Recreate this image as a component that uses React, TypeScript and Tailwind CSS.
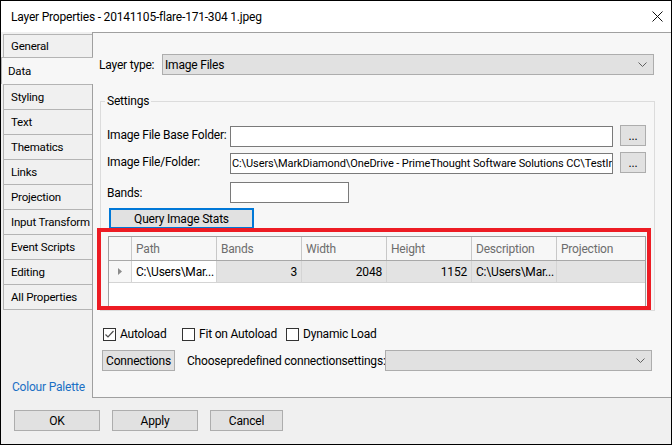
import React from 'react';

const tabs = [
  'General',
  'Data',
  'Styling',
  'Text',
  'Thematics',
  'Links',
  'Projection',
  'Input Transform',
  'Event Scripts',
  'Editing',
  'All Properties',
];

function Chevron() {
  return (
    <svg width="9" height="6" viewBox="0 0 9 6" className="shrink-0">
      <path d="M0.5 0.5 L4.5 4.5 L8.5 0.5" fill="none" stroke="#606060" strokeWidth="1" />
    </svg>
  );
}

function Combo({ value, className }: { value?: string; className: string }) {
  return (
    <div className={`relative h-[21px] bg-[#e1e1e1] border border-[#adadad] flex items-center pl-[2px] pr-[6px] shrink-0 ${className}`}>
      <span className="flex-1 leading-[16px]">{value}</span>
      <Chevron />
    </div>
  );
}

function Btn({ label, className }: { label: string; className: string }) {
  return (
    <div className={`h-[21px] bg-[#e1e1e1] border border-[#adadad] flex items-center justify-center leading-[16px] shrink-0 ${className}`}>
      {label}
    </div>
  );
}

function Check({ checked, label, className }: { checked?: boolean; label: string; className: string }) {
  return (
    <div className={`flex items-center shrink-0 ${className}`}>
      <div className="w-[13px] h-[13px] border border-[#333333] bg-white flex items-center justify-center shrink-0">
        {checked && (
          <svg width="11" height="11" viewBox="0 0 11 11">
            <path d="M1.5 5.5 L4 8 L9.5 2" fill="none" stroke="#4d4d4d" strokeWidth="1.2" />
          </svg>
        )}
      </div>
      <span className="ml-[4px] leading-[16px] whitespace-nowrap">{label}</span>
    </div>
  );
}

function DataGrid() {
  const head = 'h-[23px] border-l border-[#c8c8c8] flex items-center pl-[4px] text-[#6d6d6d]';
  const cell = 'h-full border-l border-[#d4d4d4] flex items-center';
  return (
    <div className="ml-[7px] mt-[7px] w-[538px] h-[71px] border border-[#a0a0a0] bg-white flex flex-col">
      {/* Header */}
      <div className="flex bg-[#f7f7f7] border-b border-[#a8a8a8]">
        <div className="w-[22px] h-[23px]" />
        <div className={`w-[85px] ${head}`}>Path</div>
        <div className={`w-[85px] ${head}`}>Bands</div>
        <div className={`w-[85px] ${head}`}>Width</div>
        <div className={`w-[85px] ${head}`}>Height</div>
        <div className={`w-[85px] ${head}`}>Description</div>
        <div className={`flex-1 ${head}`}>Projection</div>
      </div>
      {/* Row */}
      <div className="flex h-[22px] border-b border-[#d4d4d4] bg-[#e3e3e3]">
        <div className="w-[22px] h-full bg-[#f7f7f7] flex items-center pl-[9px]">
          <svg width="4" height="7" viewBox="0 0 4 7">
            <path d="M0 0 L4 3.5 L0 7 Z" fill="#8c8c8c" />
          </svg>
        </div>
        <div className={`w-[85px] bg-white pl-[4px] ${cell}`}>C:\Users\Mar...</div>
        <div className={`w-[85px] justify-end pr-[4px] ${cell}`}>3</div>
        <div className={`w-[85px] justify-end pr-[4px] ${cell}`}>2048</div>
        <div className={`w-[85px] justify-end pr-[4px] ${cell}`}>1152</div>
        <div className={`w-[85px] pl-[4px] ${cell}`}>C:\Users\Mar...</div>
        <div className={`flex-1 ${cell}`} />
      </div>
    </div>
  );
}

export default function App() {
  return (
    <div className="w-[672px] h-[445px] border border-black bg-[#f0f0f0] flex flex-col text-[12px] tracking-[-0.2px] text-black font-['Roboto',sans-serif] overflow-hidden">
      {/* Title bar */}
      <div className="h-[31px] bg-white flex items-center justify-between pl-[10px] pr-[8px] shrink-0">
        <span className="leading-[16px]">Layer Properties - 20141105-flare-171-304 1.jpeg</span>
        <svg width="11" height="11" viewBox="0 0 11 11">
          <path d="M0.5 0.5 L10.5 10.5 M10.5 0.5 L0.5 10.5" stroke="#111111" strokeWidth="1" />
        </svg>
      </div>

      {/* Main */}
      <div className="h-[366px] flex shrink-0">
        {/* Tabs */}
        <div className="w-[91px] flex flex-col shrink-0 text-[11.5px]">
          {tabs.map((t, i) =>
            t === 'Data' ? (
              <div
                key={t}
                className="relative z-10 w-[92px] h-[27px] bg-[#f7f7f7] border-t border-l border-[#b4b4b4] flex items-center pl-[6px] leading-[16px]"
              >
                {t}
              </div>
            ) : (
              <div
                key={t}
                className={`ml-[2px] w-[89px] border-t border-l border-[#b4b4b4] bg-[#f0f0f0] flex items-center pl-[7px] leading-[16px] whitespace-nowrap ${
                  i === 0 ? 'mt-[2px] h-[23px]' : 'h-[25px]'
                } ${i === tabs.length - 1 ? 'border-b h-[26px]' : ''}`}
              >
                {t}
              </div>
            )
          )}
          <div className="mt-auto mb-[3px] pl-[11px] leading-[16px] text-[12px] text-[#1a6fc4] whitespace-nowrap">Colour Palette</div>
        </div>

        {/* Panel */}
        <div className="flex-1 border-t border-b border-l border-[#a0a0a0] bg-[#f7f7f7] flex flex-col">
          <div className="mt-[21px] pl-[6px] flex items-center">
            <span className="w-[63px] leading-[16px] shrink-0">Layer type:</span>
            <Combo value="Image Files" className="w-[492px]" />
          </div>

          {/* Settings group */}
          <div className="relative mt-[26px] ml-[7px] w-[555px] h-[210px] border border-[#dcdcdc] flex flex-col">
            <span className="absolute left-[4px] top-[-9px] px-[2px] bg-[#f7f7f7] leading-[16px]">Settings</span>

            <div className="mt-[23px] pl-[6px] flex items-start">
              <span className="w-[123px] mt-[2px] leading-[16px] whitespace-nowrap shrink-0">Image File Base Folder:</span>
              <div className="mt-[1px] w-[383px] h-[21px] bg-white border border-[#7a7a7a] shrink-0" />
              <Btn label="..." className="ml-[7px] w-[26px]" />
            </div>

            <div className="mt-[5px] pl-[6px] flex items-start">
              <span className="w-[123px] mt-[2px] leading-[16px] whitespace-nowrap shrink-0">Image File/Folder:</span>
              <div className="mt-[1px] w-[383px] h-[21px] bg-white border border-[#7a7a7a] pl-[1px] flex items-center overflow-hidden whitespace-nowrap leading-[16px] text-[11px] tracking-[-0.1px] shrink-0">
                C:\Users\MarkDiamond\OneDrive - PrimeThought Software Solutions CC\TestIr
              </div>
              <Btn label="..." className="ml-[7px] w-[26px]" />
            </div>

            <div className="mt-[8px] pl-[6px] flex items-center">
              <span className="w-[123px] leading-[16px] shrink-0">Bands:</span>
              <div className="w-[119px] h-[21px] bg-white border border-[#7a7a7a] shrink-0" />
            </div>

            <div className="mt-[5px] ml-[8px] w-[145px] h-[21px] bg-[#e1e1e1] border-2 border-[#0078d7] flex items-center justify-center leading-[16px]">
              Query Image Stats
            </div>

            <DataGrid />

            {/* highlight annotation */}
            <div className="absolute left-[-4px] top-[126px] w-[554px] h-[82px] border-4 border-[#ed1c24] pointer-events-none" />
          </div>

          <div className="mt-[15px] pl-[10px] flex items-center h-[16px]">
            <Check checked label="Autoload" className="w-[79px]" />
            <Check label="Fit on Autoload" className="w-[104px]" />
            <Check label="Dynamic Load" className="w-[100px]" />
          </div>

          <div className="mt-[8px] pl-[9px] flex items-center">
            <Btn label="Connections" className="w-[73px]" />
            <span className="ml-[12px] w-[198px] leading-[16px] whitespace-nowrap shrink-0">Choosepredefined connectionsettings:</span>
            <Combo className="w-[267px]" />
          </div>
        </div>
      </div>

      {/* Bottom buttons */}
      <div className="flex-1 pt-[12px] pl-[13px] flex items-start">
        <Btn label="OK" className="w-[86px]" />
        <Btn label="Apply" className="ml-[12px] w-[86px]" />
        <Btn label="Cancel" className="ml-[12px] w-[73px]" />
      </div>
    </div>
  );
}
